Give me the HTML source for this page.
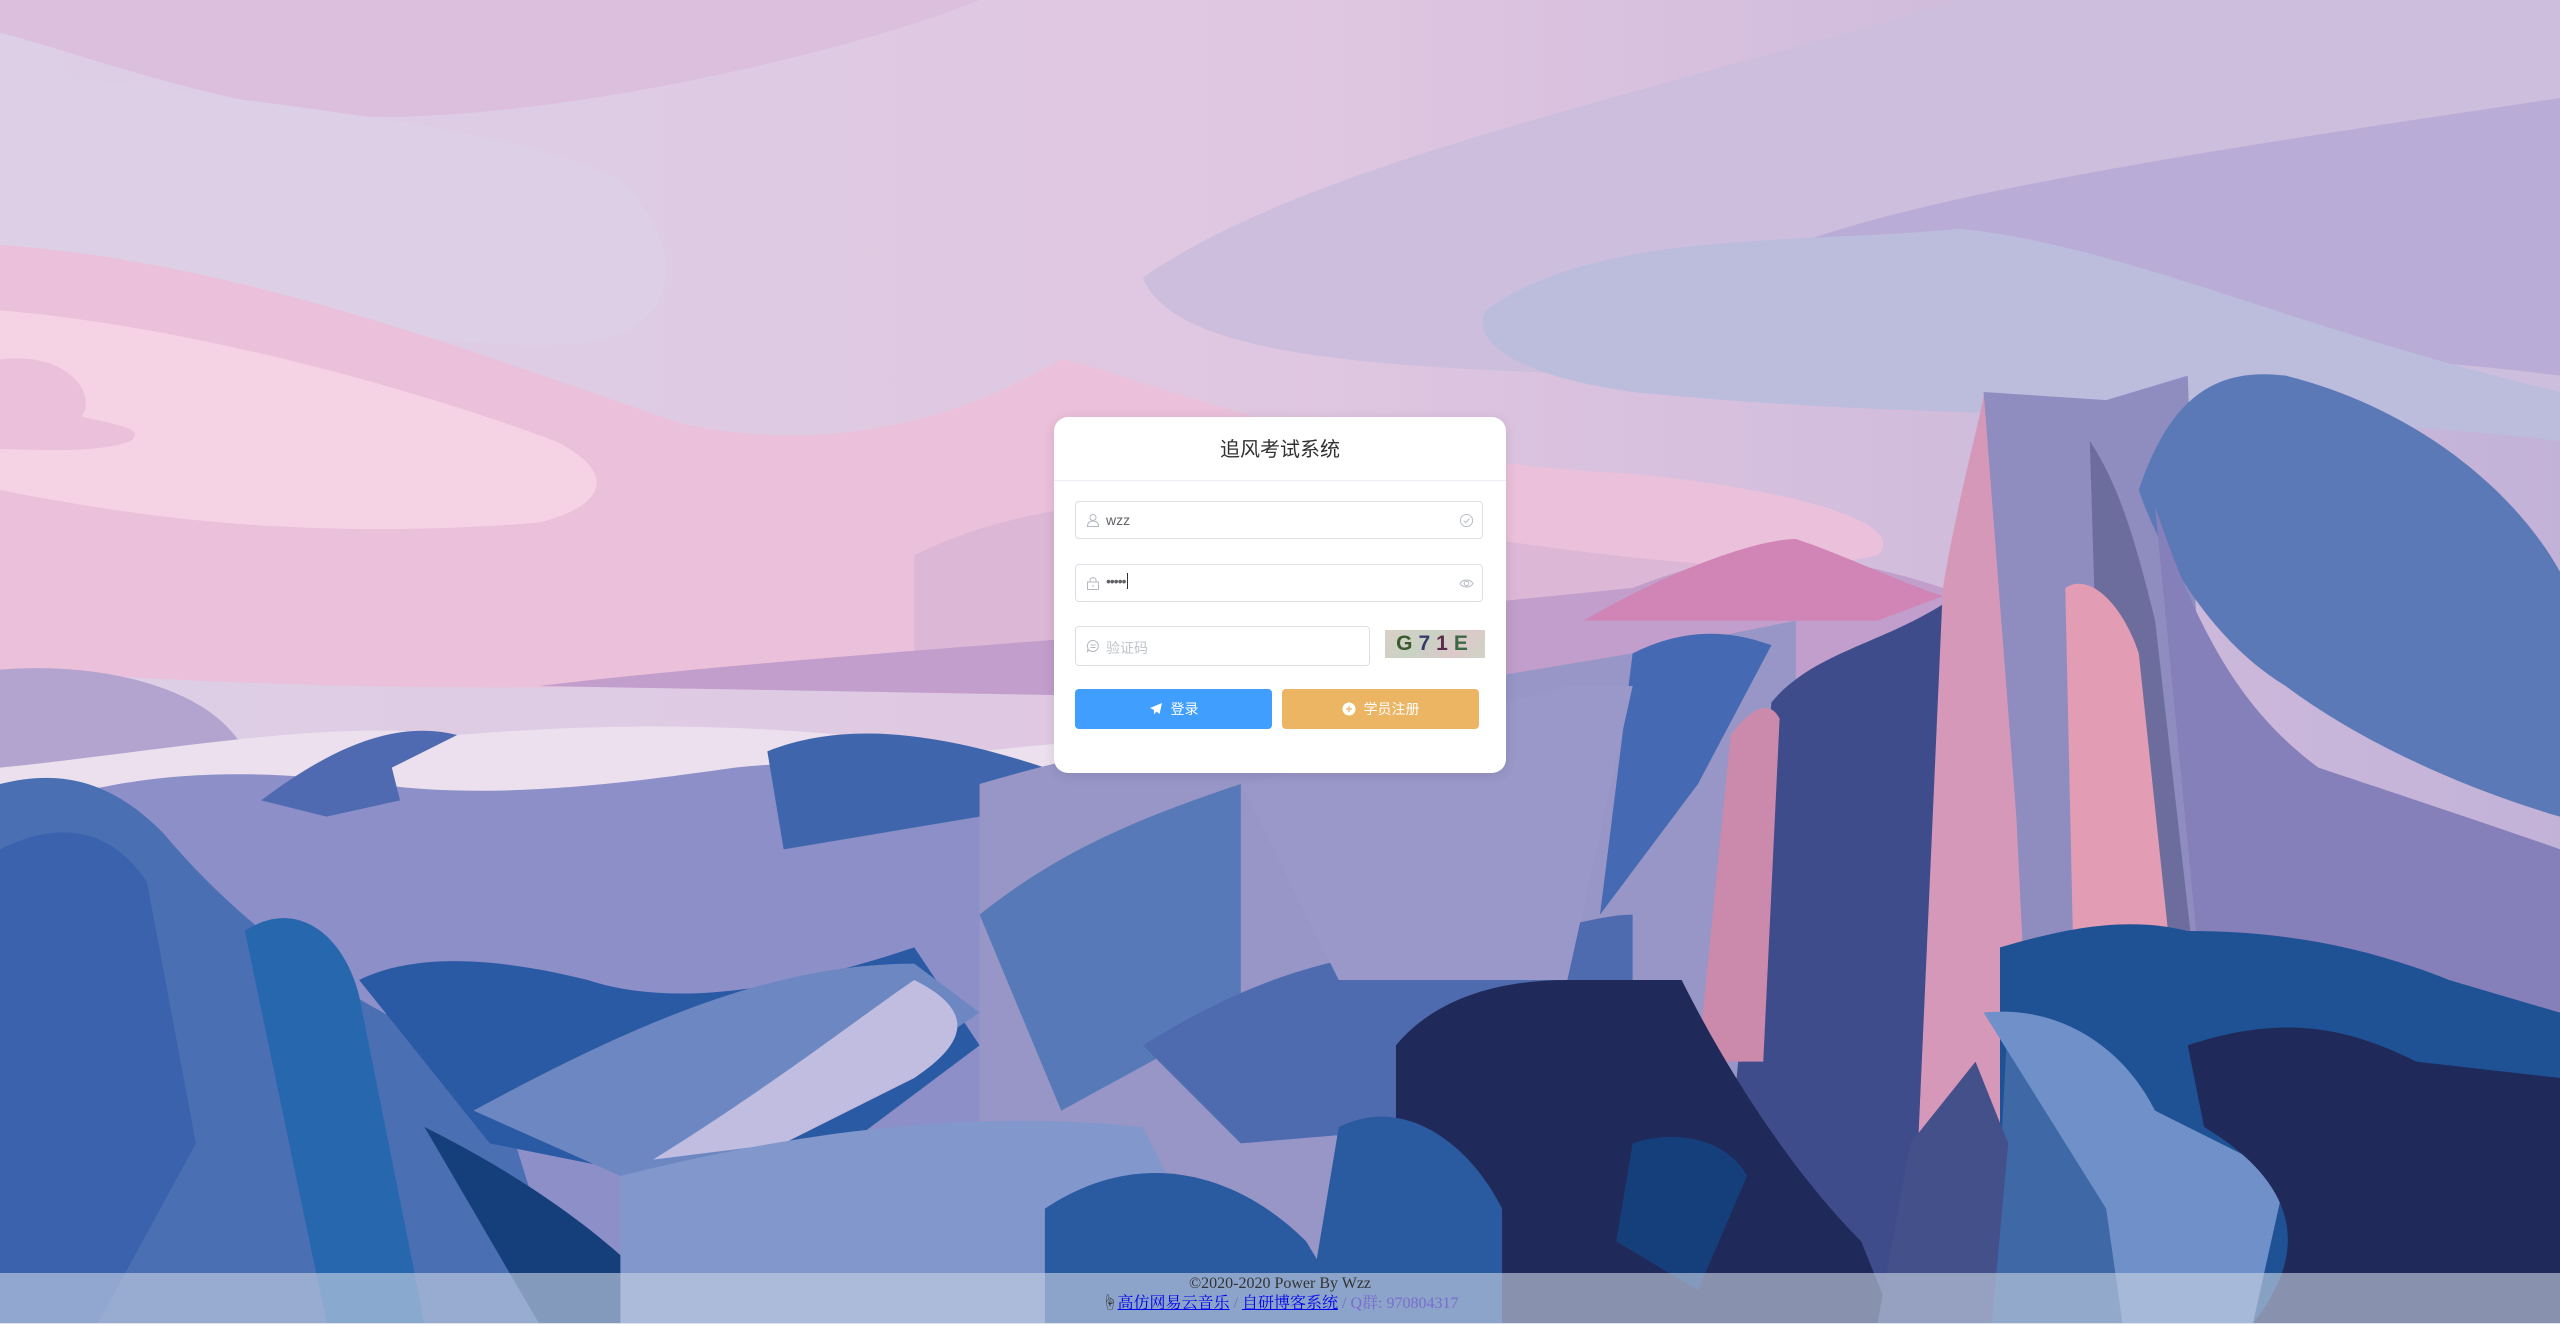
<!DOCTYPE html>
<html><head><meta charset="utf-8">
<style>
html,body{margin:0;padding:0;width:2560px;height:1323px;overflow:hidden;font-family:"Liberation Sans","Noto Sans CJK SC",sans-serif;}
#bg{position:absolute;left:0;top:0;width:2560px;height:1323px;}
.card{position:absolute;left:1054px;top:417px;width:452px;height:356px;background:#fff;border-radius:14px;box-shadow:0 2px 12px rgba(0,0,0,.1);}
.title{height:63px;border-bottom:1px solid #ebeef5;text-align:center;line-height:66px;font-size:20px;color:#303133;}
.inp{position:absolute;left:21px;width:408px;height:38px;border:1px solid #dcdfe6;border-radius:4px;box-sizing:border-box;font-size:14px;color:#606266;}
.inp .ic{position:absolute;left:10px;top:11px;width:14px;height:14px;}
.inp .tx{position:absolute;left:30px;top:10px;}
.inp .rc{position:absolute;right:8px;top:11px;width:15px;height:15px;}
.btn{position:absolute;top:272px;height:40px;border-radius:4px;color:#fff;font-size:14px;text-align:center;line-height:40px;}
.footer{position:absolute;left:0;top:1273px;width:2560px;height:50px;background:rgba(200,210,228,.62);text-align:center;font-family:"Liberation Serif","Noto Serif CJK SC",serif;font-size:16px;color:#333;line-height:20px;padding-top:1px;}
.footer a{color:#00e;text-decoration:underline;}
.footer .g{color:#7a6ccf;}
</style></head><body>
<svg id="bg" viewBox="0 0 1568 810" preserveAspectRatio="none">
<defs>
<linearGradient id="sky" x1="0" y1="0" x2="1" y2="0"><stop offset="0" stop-color="#ddcfe6"/><stop offset=".5" stop-color="#e0c7e1"/><stop offset="1" stop-color="#c3b2d8"/></linearGradient>
</defs>
<rect width="1568" height="810" fill="url(#sky)"/>
<path d="M0 0 H600 C500 40 300 80 200 70 C120 60 40 30 0 20Z" fill="#dbbfdc"/>
<path d="M0 40 C100 60 300 70 380 110 C420 150 420 200 360 210 C250 220 100 170 0 150Z" fill="#dccfe6"/>
<path d="M700 170 C800 100 1000 60 1200 0 H1568 V250 C1400 230 1200 240 1000 230 C850 225 720 220 700 170Z" fill="#cdbede"/>
<path d="M1040 180 C1100 130 1300 100 1568 60 V230 C1450 215 1300 210 1200 220 C1100 225 1030 205 1040 180Z" fill="#b9acd6"/>
<path d="M910 190 C980 140 1100 150 1200 140 C1300 150 1400 200 1568 240 V270 C1400 250 1200 260 1000 240 C930 230 900 210 910 190Z" fill="#bcbcdd"/>
<path d="M0 150 C150 160 300 220 420 260 C520 280 600 250 650 220 C700 230 800 280 1000 290 C1100 300 1170 320 1150 340 C1000 370 800 360 650 400 C500 420 300 430 0 410Z" fill="#ebc0da"/>
<path d="M0 190 C120 200 260 240 340 270 C380 290 370 310 330 320 C200 330 100 320 0 300Z" fill="#f6d3e4"/>
<path d="M0 220 C40 215 60 240 50 255 C70 260 90 262 80 270 C60 278 20 275 0 275Z" fill="#ebc0da"/>
<path d="M560 340 C620 310 700 300 800 310 C900 330 1000 345 1120 350 C1050 380 900 400 700 410 L560 400Z" fill="#dcb7d6"/>
<path d="M330 420 C500 400 700 390 900 370 L1000 360 C1050 340 1100 330 1190 360 L1190 420 L900 430 Z" fill="#c19ecb"/>
<path d="M970 380 C1030 345 1080 330 1100 330 C1130 340 1160 355 1190 365 L1150 380 Z" fill="#d085b6"/>
<path d="M0 410 C60 405 130 420 150 460 L150 480 L0 500Z" fill="#b3a4cf"/>
<path d="M0 470 C100 460 200 440 280 450 C400 440 500 445 600 460 C700 450 800 440 900 430 L900 520 L0 560Z" fill="#ece0ee"/>
<path d="M0 500 C80 470 150 470 230 480 C300 490 380 480 450 470 C550 460 650 470 700 480 L700 810 H0Z" fill="#8d8fc8"/>
<path d="M160 490 C200 460 240 440 280 450 L240 470 L245 490 L200 500 Z" fill="#4f6ab0"/>
<path d="M470 460 C520 440 580 450 640 470 L600 500 L480 520 Z" fill="#3f66ad"/>
<path d="M600 480 C700 450 800 440 880 420 L1000 400 L1100 380 L1100 810 H600Z" fill="#9796c7"/>
<path d="M1000 400 C1040 380 1070 390 1085 395 L1040 480 L980 560 Z" fill="#4569b2"/>
<path d="M0 480 C40 470 70 480 100 510 C150 570 220 620 300 650 L350 810 H0Z" fill="#4a6fb3"/>
<path d="M0 520 C40 500 70 510 90 540 L120 700 L60 810 H0Z" fill="#3a62ad"/>
<path d="M150 570 C180 550 210 570 220 610 L260 810 H200 Z" fill="#2667ae"/>
<path d="M220 600 C260 580 320 590 360 600 C420 620 500 600 560 580 L600 640 L520 700 L400 720 L300 700 Z" fill="#2a5aa3"/>
<path d="M290 680 C400 620 480 590 560 590 L600 620 L480 700 L380 720 Z" fill="#6c87c2"/>
<path d="M400 710 C480 660 530 620 560 600 C600 620 590 640 560 660 L480 700Z" fill="#c1bde0"/>
<path d="M260 690 C320 720 380 760 420 810 H330 Z" fill="#153f7b"/>
<path d="M380 720 C500 690 600 680 700 690 L760 810 H380Z" fill="#8297cc"/>
<path d="M640 740 C700 700 760 720 800 760 L830 810 H640Z" fill="#2a5a9f"/>
<path d="M600 560 C650 520 700 500 760 480 L760 620 L650 680 Z" fill="#5779b8"/>
<path d="M700 640 C780 590 840 580 900 580 C950 570 980 560 1000 560 L1000 680 L760 700Z" fill="#4f6bb0"/>
<path d="M760 480 C820 470 880 440 960 420 L1000 420 L960 600 L820 600 Z" fill="#9a98c8"/>
<path d="M1085 430 C1110 400 1150 395 1190 370 L1170 810 H1085 L1060 700 Z" fill="#3f4c8c"/>
<path d="M1060 450 C1075 430 1085 430 1090 440 L1080 650 L1040 650 Z" fill="#cb8aab"/>
<path d="M1190 360 C1200 300 1215 250 1215 240 L1280 270 L1250 810 H1170 Z" fill="#d698b9"/>
<path d="M1215 240 L1290 245 L1340 230 L1360 810 H1250 L1235 500 Z" fill="#8f8cc0"/>
<path d="M1280 270 C1300 300 1310 340 1320 380 L1345 600 L1290 600 Z" fill="#6c6d9c"/>
<path d="M1265 360 C1280 350 1300 370 1310 400 L1330 590 L1270 590 Z" fill="#e29db4"/>
<path d="M1310 300 C1330 240 1360 225 1400 230 C1480 250 1540 300 1568 350 V500 C1500 480 1440 450 1400 420 C1350 390 1320 330 1310 300Z" fill="#5a79b6"/>
<path d="M1320 310 C1350 400 1380 440 1420 470 C1480 490 1540 510 1568 520 V640 L1350 620 Z" fill="#857fba"/>
<path d="M1225 580 C1260 570 1300 560 1340 570 C1400 570 1450 580 1500 600 L1568 620 V810 H1225Z" fill="#1f5294"/>
<path d="M1230 620 C1270 640 1310 680 1330 720 L1300 810 H1220 Z" fill="#3e68a6"/>
<path d="M1215 620 C1260 615 1300 640 1320 680 L1400 720 L1380 810 H1300 L1290 740 Z" fill="#6f90c9"/>
<path d="M1340 640 C1400 620 1440 630 1480 650 L1568 660 V810 H1380 C1420 760 1400 720 1350 690 Z" fill="#202a5a"/>
<path d="M855 640 C880 610 920 600 960 600 L1030 600 C1060 660 1100 720 1140 760 L1160 810 H855Z" fill="#202a5a"/>
<path d="M820 690 C860 670 900 700 920 740 L920 810 H800 Z" fill="#2a5a9f"/>
<path d="M1000 700 C1030 690 1060 700 1070 720 L1040 790 L990 760 Z" fill="#153f7b"/>
<path d="M1170 700 L1210 650 L1230 700 L1220 810 H1150 Z" fill="#44508a"/>
</svg>

<div class="card">
  <div class="title">追风考试系统</div>
  <div class="inp" style="top:84px">
    <svg class="ic" viewBox="0 0 14 14" fill="none" stroke="#b4b8c0" stroke-width="1"><circle cx="7" cy="4.5" r="3"/><path d="M1.5 13.5 C1.5 9.5 4 8 7 8 C10 8 12.5 9.5 12.5 13.5Z"/></svg>
    <span class="tx">wzz</span>
    <svg class="rc" viewBox="0 0 16 16" fill="none" stroke="#b4b8c0" stroke-width="1"><circle cx="8" cy="8" r="6.5"/><path d="M5 8.2 L7.2 10.2 L11 6"/></svg>
  </div>
  <div class="inp" style="top:147px">
    <svg class="ic" viewBox="0 0 14 14" fill="none" stroke="#b4b8c0" stroke-width="1"><rect x="1.5" y="6" width="11" height="7.5"/><path d="M4 6 V4 C4 1 10 1 10 4 V6"/><path d="M7 9 V11"/></svg>
    <span class="tx" style="letter-spacing:-1px;top:8px">•••••<span style="border-left:1px solid #333;margin-left:1px"></span></span>
    <svg class="rc" viewBox="0 0 16 16" fill="none" stroke="#b4b8c0" stroke-width="1"><path d="M1 8 C4 3 12 3 15 8 C12 13 4 13 1 8Z"/><circle cx="8" cy="8" r="2.5"/></svg>
  </div>
  <div class="inp" style="top:209px;width:295px;height:40px">
    <svg class="ic" viewBox="0 0 14 14" fill="none" stroke="#b4b8c0" stroke-width="1" style="top:12px"><path d="M7 1.5 A5.5 5.5 0 1 1 3 11 L1.5 12.5 L2 9.5 A5.5 5.5 0 0 1 7 1.5Z"/><path d="M4.5 6 H9.5 M4.5 8.5 H9.5"/></svg>
    <span class="tx" style="color:#c0c4cc;top:11px">验证码</span>
  </div>
  <div style="position:absolute;left:331px;top:213px;width:100px;height:28px;background:linear-gradient(135deg,#d9cfc6,#c9d2c4 40%,#dcc9c9 70%,#cfd3c6);font:bold 21px 'Liberation Sans',sans-serif;line-height:28px;letter-spacing:6px;text-align:center;">
    <span style="color:#3a5a2f">G</span><span style="color:#3a3a6a">7</span><span style="color:#5a2a4a">1</span><span style="color:#3b6a45">E</span>
  </div>
  <div class="btn" style="left:21px;width:197px;background:#409eff;">
    <svg width="14" height="14" viewBox="0 0 14 14" style="vertical-align:-2px;margin-right:8px"><path d="M13 1 L1 6 L5 8 L5 12.5 L7.5 9.5 L10.5 12 Z" fill="#fff"/></svg>登录</div>
  <div class="btn" style="left:228px;width:197px;background:#ebb563;">
    <svg width="14" height="14" viewBox="0 0 14 14" style="vertical-align:-2px;margin-right:8px"><circle cx="7" cy="7" r="6.5" fill="#fff"/><path d="M7 4 V10 M4 7 H10" stroke="#ebb563" stroke-width="1.2"/></svg>学员注册</div>
</div>

<div class="footer">©2020-2020 Power By Wzz<br>☝<a>高仿网易云音乐</a> <span class="g">/</span> <a>自研博客系统</a> <span class="g">/ Q群: 970804317</span></div>
</body></html>
